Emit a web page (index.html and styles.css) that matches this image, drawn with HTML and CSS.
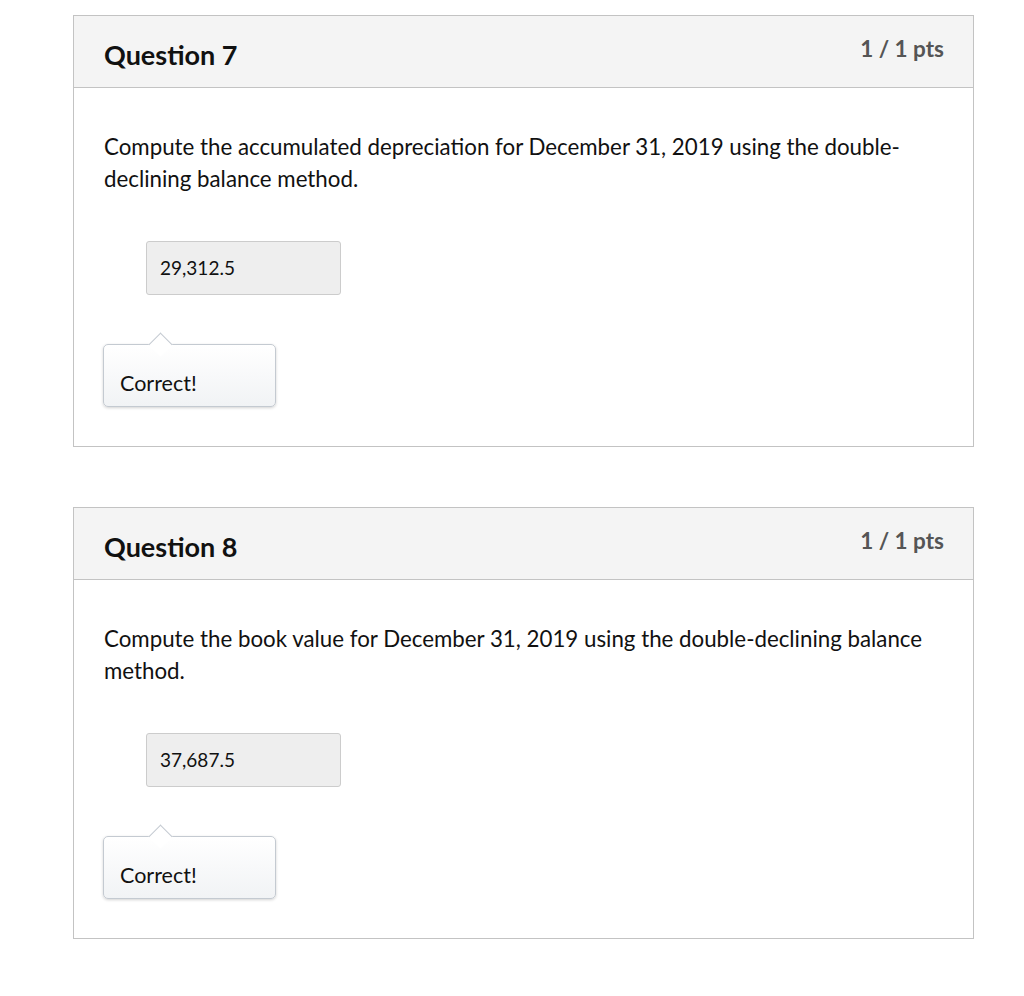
FILE: index.html
```html
<!DOCTYPE html>
<html lang="en">
<head>
    <meta charset="UTF-8">
    <title>Quiz results</title>
    <link rel="stylesheet" href="styles.css">
</head>
<body>
    <div class="question">
        <div class="question-header">
            <h2 class="question-title">Question 7</h2>
            <span class="question-points">1 / 1 pts</span>
        </div>
        <div class="question-body">
            <p class="question-text">Compute the accumulated depreciation for December 31, 2019 using the double-declining balance method.</p>
            <div class="answer">29,312.5</div>
            <div class="feedback">Correct!</div>
        </div>
    </div>

    <div class="question">
        <div class="question-header">
            <h2 class="question-title">Question 8</h2>
            <span class="question-points">1 / 1 pts</span>
        </div>
        <div class="question-body">
            <p class="question-text">Compute the book value for December 31, 2019 using the double-declining balance method.</p>
            <div class="answer">37,687.5</div>
            <div class="feedback">Correct!</div>
        </div>
    </div>
</body>
</html>
```

FILE: styles.css
```css
body {
    margin: 0;
    padding: 15px 0 0 73px;
    background: #fff;
    font-family: Lato, "Liberation Sans", sans-serif;
    color: #111;
}

.question {
    box-sizing: border-box;
    width: 901px;
    border: 1px solid #c3c3c3;
    margin-bottom: 60px;
}

.question-header {
    box-sizing: border-box;
    height: 72px;
    background: #f4f4f4;
    border-bottom: 1px solid #c3c3c3;
    display: flex;
    justify-content: space-between;
    align-items: flex-start;
    padding: 0 29px 0 30px;
}

.question-title {
    margin: 23px 0 0;
    font-size: 27px;
    font-weight: 700;
    line-height: 32px;
    color: #111;
}

.question-points {
    margin-top: 19px;
    font-size: 22.5px;
    font-weight: 700;
    line-height: 28px;
    color: #555;
}

.question-body {
    padding: 43px 30px 39px 30px;
}

.question-text {
    margin: 0;
    font-size: 22.3px;
    line-height: 32px;
}

.answer {
    box-sizing: border-box;
    width: 195px;
    height: 54px;
    margin: 46px 0 0 42px;
    padding: 0 13px;
    background: #eee;
    border: 1px solid #ccc;
    border-radius: 3px;
    font-size: 19px;
    line-height: 52px;
}

.feedback {
    position: relative;
    box-sizing: border-box;
    width: 173px;
    height: 63px;
    margin: 49px 0 0 -1px;
    padding: 25px 16px 0;
    background: linear-gradient(#fff, #f1f3f5);
    border: 1px solid #c4cad1;
    border-radius: 5px;
    box-shadow: 0 1px 3px rgba(0, 0, 0, 0.18);
    font-size: 21.5px;
    line-height: 26px;
}

.feedback::before {
    content: "";
    position: absolute;
    left: 48px;
    top: -9px;
    box-sizing: border-box;
    width: 17px;
    height: 17px;
    background: #fff;
    border-top: 1px solid #c4cad1;
    border-left: 1px solid #c4cad1;
    transform: rotate(45deg);
}
```
